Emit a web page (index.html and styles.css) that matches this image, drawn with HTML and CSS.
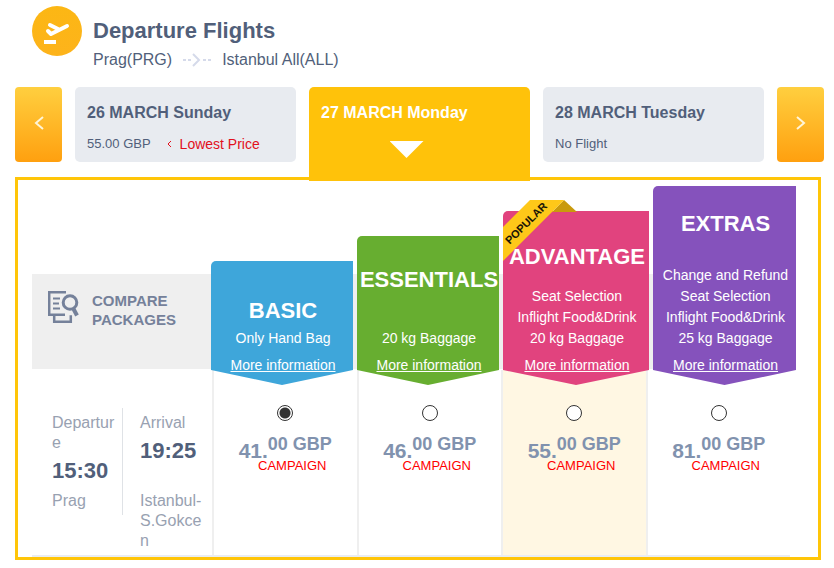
FILE: index.html
```html
<!DOCTYPE html>
<html lang="en">
<head>
  <meta charset="utf-8">
  <title>Departure Flights</title>
  <link rel="stylesheet" href="styles.css">
</head>
<body>
  <header class="flight-header">
    <svg class="plane-icon" viewBox="0 0 50 50" aria-hidden="true">
      <defs>
        <linearGradient id="orange" x1="0" y1="0" x2="0" y2="1">
          <stop offset="0" stop-color="#fcb714"/>
          <stop offset="1" stop-color="#fdb31b"/>
        </linearGradient>
      </defs>
      <circle cx="25" cy="25" r="25" fill="url(#orange)"/>
      <rect x="12" y="34" width="12" height="4" fill="#fff"/>
      <g fill="none" stroke="#fff" stroke-linecap="round" stroke-linejoin="round">
        <path d="M16 25l3 3 16-8" stroke-width="4"/>
        <path d="M18 19l8 4" stroke-width="4"/>
      </g>
    </svg>
    <div>
      <h1>Departure Flights</h1>
      <p class="route">
        <span>Prag(PRG)</span>
        <svg class="route-arrow" viewBox="0 0 28 14" aria-hidden="true">
          <path d="M0 7h3M5 7h3M20 7h3M25 7h3" stroke="#d5daea" stroke-width="2"/>
          <path d="M10 1l6 6-6 6" fill="none" stroke="#d5daea" stroke-width="2"/>
        </svg>
        <span>Istanbul All(ALL)</span>
      </p>
    </div>
  </header>

  <nav class="days">
    <button class="day-arrow" aria-label="Previous day">
      <svg viewBox="0 0 10 14"><path d="M9 1L2 7l7 6"/></svg>
    </button>
    <button class="day">
      <span class="day-name">26 MARCH Sunday</span>
      <span class="day-info">55.00 GBP
        <span class="lowest">
          <svg viewBox="0 0 5 6" aria-hidden="true"><path d="M4 0L1 3l3 3"/></svg>Lowest Price
        </span>
      </span>
    </button>
    <button class="day active">
      <span class="day-name">27 MARCH Monday</span>
      <span class="day-pointer"></span>
    </button>
    <button class="day">
      <span class="day-name">28 MARCH Tuesday</span>
      <span class="day-info">No Flight</span>
    </button>
    <button class="day-arrow" aria-label="Next day">
      <svg viewBox="0 0 10 14"><path d="M1 1l7 6-7 6"/></svg>
    </button>
  </nav>

  <main class="panel">
    <div class="packages">
      <a href="#" class="compare">
        <svg viewBox="0 0 31 32" aria-hidden="true">
          <g fill="none" stroke="#75819a" stroke-width="2.5">
            <path d="M18 1.2H1.2v22.5H17"/>
            <path d="M6.2 24v6.8h16.6v-6.5"/>
            <path d="M5 7.5h7M5 12.5h6M5 17.5h7" stroke-width="2"/>
            <circle cx="22" cy="11.5" r="6.8" stroke-width="3"/>
            <path d="M25 17l4 7.5" stroke-width="4"/>
          </g>
        </svg>
        <span>COMPARE PACKAGES</span>
      </a>

      <div class="ribbons">
        <section class="ribbon basic">
          <h2>BASIC</h2>
          <ul>
            <li>Only Hand Bag</li>
          </ul>
          <a href="#">More information</a>
        </section>
        <section class="ribbon essentials">
          <h2>ESSENTIALS</h2>
          <ul>
            <li>20 kg Baggage</li>
          </ul>
          <a href="#">More information</a>
        </section>
        <section class="ribbon advantage">
          <svg class="popular" viewBox="0 0 74 62">
            <path d="M61 0l13 12H49z" fill="#c99a0c"/>
            <path d="M27 0h34L0 61V27z" fill="#fec819"/>
            <text x="23" y="27" transform="rotate(-45 23 23)">POPULAR</text>
          </svg>
          <h2>ADVANTAGE</h2>
          <ul>
            <li>Seat Selection</li>
            <li>Inflight Food&amp;Drink</li>
            <li>20 kg Baggage</li>
          </ul>
          <a href="#">More information</a>
        </section>
        <section class="ribbon extras">
          <h2>EXTRAS</h2>
          <ul>
            <li>Change and Refund</li>
            <li>Seat Selection</li>
            <li>Inflight Food&amp;Drink</li>
            <li>25 kg Baggage</li>
          </ul>
          <a href="#">More information</a>
        </section>
      </div>
    </div>

    <div class="fares">
      <div class="schedule">
        <div class="leg">
          <div>Departure</div>
          <div class="time">15:30</div>
        </div>
        <div class="leg arrival">
          <div>Arrival</div>
          <div class="time">19:25</div>
        </div>
        <div class="place">Prag</div>
        <div class="place arrival">Istanbul-S.Gokcen</div>
        <div class="divider"></div>
      </div>

      <label class="fare">
        <input type="radio" name="fare" checked>
        <span class="price">41.<sup>00 GBP</sup></span>
        <span class="campaign">CAMPAIGN</span>
      </label>
      <label class="fare">
        <input type="radio" name="fare">
        <span class="price">46.<sup>00 GBP</sup></span>
        <span class="campaign">CAMPAIGN</span>
      </label>
      <label class="fare recommended">
        <input type="radio" name="fare">
        <span class="price">55.<sup>00 GBP</sup></span>
        <span class="campaign">CAMPAIGN</span>
      </label>
      <label class="fare">
        <input type="radio" name="fare">
        <span class="price">81.<sup>00 GBP</sup></span>
        <span class="campaign">CAMPAIGN</span>
      </label>
    </div>
  </main>
</body>
</html>
```
FILE: styles.css
```css
* {
  box-sizing: border-box;
}

body {
  margin: 0;
  background: #fff;
  color: #515f7a;
  font-family: "Liberation Sans", Arial, sans-serif;
  font-size: 16px;
  line-height: 20px;
}

h1, h2, p, ul {
  margin: 0;
  padding: 0;
}

button {
  border: none;
  font-family: inherit;
  color: inherit;
  cursor: pointer;
}

/* header */
.flight-header {
  display: flex;
  gap: 11px;
  padding: 6px 32px 17px;
}

.plane-icon {
  width: 50px;
  height: 50px;
}

h1 {
  margin-top: 11px;
  font-size: 22px;
  line-height: 28px;
}

.route {
  display: flex;
  align-items: center;
  gap: 11px;
  margin-top: 5px;
}

.route-arrow {
  width: 28px;
  height: 14px;
}

/* day selector */
.days {
  display: flex;
  align-items: flex-start;
  gap: 13px;
  padding: 0 10px 0 15px;
}

.day-arrow {
  flex: 0 0 47px;
  height: 75px;
  padding: 0;
  border-radius: 4px;
  background: linear-gradient(#ffcf3f, #ffa00f);
}

.day-arrow svg {
  width: 10px;
  height: 14px;
  fill: none;
  stroke: #fff5d8;
  stroke-width: 2;
}

.day {
  display: flex;
  flex: 1;
  flex-direction: column;
  gap: 11px;
  height: 75px;
  padding: 16px 12px 0;
  border-radius: 5px;
  background: #e8ebf0;
  text-align: left;
}

.day-name {
  font-size: 16px;
  font-weight: bold;
  line-height: 20px;
}

.day-info {
  display: flex;
  gap: 16px;
  font-size: 13px;
  line-height: 20px;
}

.lowest {
  display: flex;
  align-items: center;
  gap: 8px;
  color: #e2101c;
  font-size: 14px;
}

.lowest svg {
  width: 5px;
  height: 6px;
  fill: none;
  stroke: #e2101c;
}

.day.active {
  position: relative;
  z-index: 1;
  height: 94px;
  gap: 18px;
  border-radius: 5px 5px 0 0;
  background: #ffc20a;
  color: #fff;
}

.day-pointer {
  align-self: center;
  width: 34px;
  height: 17px;
  margin-right: 26px;
  background: #fff;
  clip-path: polygon(0 0, 100% 0, 50% 100%);
}

/* packages */
.panel {
  margin: -4px 13px 8px 15px;
  padding: 6px 22px 0 14px;
  border: 3px solid #ffc508;
}

/* stays above the fares so the ribbon tips are not covered */
.packages {
  position: relative;
  z-index: 1;
  display: grid;
  grid-template-columns: 179px 1fr;
  align-items: end;
  background: linear-gradient(#efefef, #efefef) no-repeat 0 88px / 100% 95px;
}

.compare {
  display: flex;
  gap: 13px;
  height: 95px;
  margin-bottom: 16px;
  padding: 17px 30px 0 16px;
  color: #75819a;
  font-size: 15px;
  font-weight: bold;
  line-height: 19px;
  text-decoration: none;
}

.compare svg {
  flex: none;
  width: 31px;
  height: 32px;
}

.ribbons {
  display: grid;
  grid-template-columns: 142fr 142fr 146fr 143fr;
  align-items: end;
  gap: 4px;
}

.ribbon {
  position: relative;
  isolation: isolate;
  display: flex;
  flex-direction: column;
  min-width: 0;
  padding: 0 0 9px 2px;
  color: #fff;
  text-align: center;
}

.ribbon::before {
  content: "";
  position: absolute;
  inset: 0;
  z-index: -1;
  border-radius: 5px 0 0 0;
  background: var(--color);
  clip-path: polygon(0 0, 100% 0, 100% calc(100% - 15px), 50% 100%, 0 calc(100% - 15px));
}

.ribbon h2 {
  font-size: 22px;
  line-height: 28px;
  white-space: nowrap;
}

.ribbon ul {
  margin: auto 0 6px;
  list-style: none;
  font-size: 14px;
  line-height: 21px;
}

.ribbon a {
  color: inherit;
  font-size: 14px;
  line-height: 21px;
}

.basic {
  --color: #3ea6da;
  min-height: 124px;
  padding-top: 36px;
}

.essentials {
  --color: #67ae30;
  min-height: 149px;
  padding-top: 30px;
}

.advantage {
  --color: #e1437e;
  min-height: 174px;
  padding-top: 32px;
}

.extras {
  --color: #8552bc;
  min-height: 199px;
  padding-top: 24px;
}

.popular {
  position: absolute;
  top: -11px;
  left: 0;
  z-index: -1;
  width: 74px;
  height: 62px;
}

.popular text {
  fill: #1c1606;
  font-size: 11px;
  font-weight: bold;
  text-anchor: middle;
}

/* fares */
.fares {
  display: grid;
  grid-template-columns: 180px repeat(4, 1fr);
  margin: -15px 6px 0 0;
  border-bottom: 2px solid #eaedf2;
}

.schedule {
  display: grid;
  grid-template-columns: 63px 63px;
  grid-template-rows: auto auto;
  gap: 2px 25px;
  padding: 43px 0 4px 20px;
  color: #98a1b1;
  overflow-wrap: anywhere;
}

.time {
  color: #515f7a;
  font-size: 22px;
  font-weight: bold;
  line-height: 36px;
}

.divider {
  grid-area: 1 / 1 / 3 / 2;
  justify-self: end;
  width: 1px;
  height: 107px;
  margin: -5px -8px 0 0;
  background: #dfe2e6;
}

.leg, .place {
  grid-column: 1;
}

.leg {
  grid-row: 1;
}

.place {
  grid-row: 2;
}

.arrival {
  grid-column: 2;
}

.fare {
  display: flex;
  flex-direction: column;
  align-items: center;
  padding-top: 35px;
  border-left: 2px solid #efefef;
}

.recommended {
  background: #fff7e3;
}

.fare input {
  appearance: none;
  width: 16px;
  height: 16px;
  margin: 0;
  border: 1px solid #333;
  border-radius: 50%;
  background: #fff;
}

.fare input:checked {
  background: radial-gradient(circle, #333 5px, #fff 6px);
}

.price {
  margin-top: 22px;
  color: #8192ae;
  font-size: 21px;
  font-weight: bold;
  line-height: 16px;
}

.price sup {
  font-size: 18px;
  line-height: 0;
}

.campaign {
  padding-left: 14px;
  color: #f00;
  font-size: 13px;
  line-height: 14px;
}
```
